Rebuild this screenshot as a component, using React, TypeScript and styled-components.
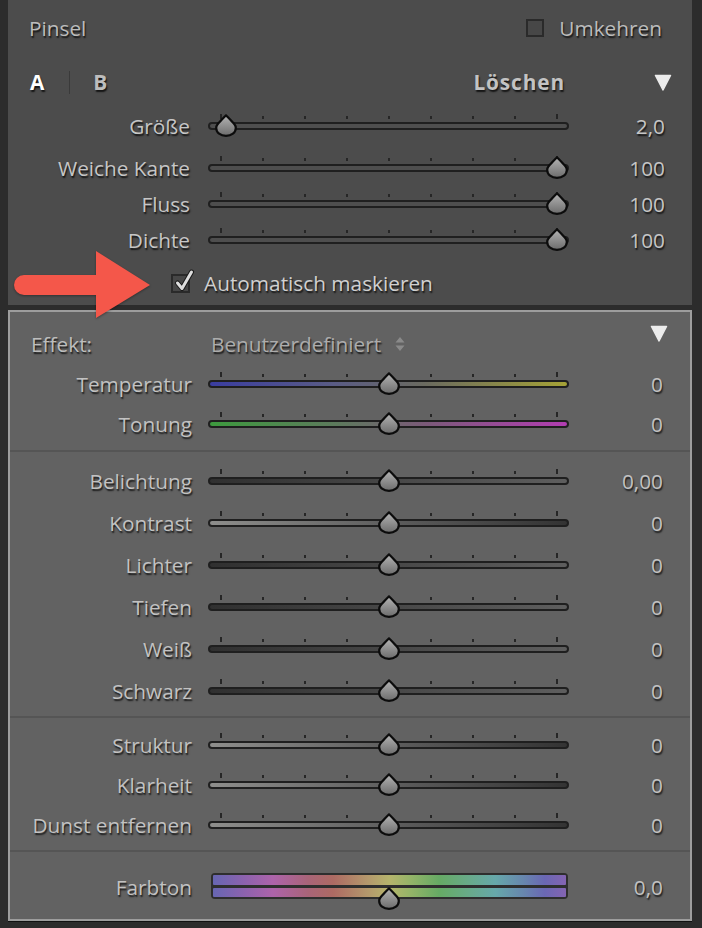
import React from 'react'
import styled, { createGlobalStyle } from 'styled-components'

const GlobalStyle = createGlobalStyle`
  html, body {
    margin: 0;
    padding: 0;
    background: #2c2c2c;
  }
  body {
    font-family: 'Open Sans', 'Noto Sans', sans-serif;
  }
`

const Frame = styled.div`
  position: relative;
  width: 702px;
  height: 928px;
  box-sizing: border-box;
  padding: 0 10px 0 8px;
  background: #2c2c2c;
  display: flex;
  flex-direction: column;
  gap: 5px;
`

const TopPanel = styled.div`
  height: 305px;
  box-sizing: border-box;
  padding-top: 12px;
  background: #4c4c4c;
  display: flex;
  flex-direction: column;
`

const LowerPanel = styled.div`
  height: 611px;
  box-sizing: border-box;
  padding: 14px 0 7px;
  background: #626262;
  border: 2px solid #9d9d9d;
  box-shadow: 0 1px 0 #111;
  display: flex;
  flex-direction: column;
`

const Text = styled.span<{ $color?: string; $bold?: boolean }>`
  font-size: 20.8px;
  font-weight: ${({ $bold }) => ($bold ? 700 : 400)};
  color: ${({ $color }) => $color || '#c6c6c6'};
  text-shadow: 1px 1.5px 1.5px rgba(0, 0, 0, 0.75);
  white-space: nowrap;
  letter-spacing: ${({ $bold }) => ($bold ? '0.9px' : '0')};
`

const HeaderRow = styled.div`
  height: 32px;
  display: flex;
  align-items: center;
  justify-content: space-between;
  padding: 0 30px 0 21px;
`

const CheckLabel = styled.label`
  display: flex;
  align-items: center;
  gap: 15px;
`

const Box = styled.span<{ $size: number }>`
  position: relative;
  width: ${({ $size }) => $size}px;
  height: ${({ $size }) => $size}px;
  box-sizing: border-box;
  border: 2px solid #2a2a2a;
  background: #474747;
  flex: none;
`

const CheckMark = styled.svg`
  position: absolute;
  left: 1px;
  top: -7px;
  overflow: visible;
`

const TabRow = styled.div`
  height: 32px;
  margin-top: 22px;
  display: flex;
  align-items: center;
  padding: 0 20px 0 22px;
`

const TabSep = styled.span`
  width: 1px;
  height: 23px;
  margin: 0 23px 0 24px;
  background: #3a3a3a;
`

const Spacer = styled.span`
  flex: 1;
`

const DisclosureIcon = styled.svg<{ $gap?: number }>`
  flex: none;
  margin-left: ${({ $gap }) => $gap || 0}px;
`

const SliderRow = styled.div<{ $height: number; $mt?: number; $gap: number }>`
  display: grid;
  grid-template-columns: 182px 361px 1fr;
  column-gap: ${({ $gap }) => $gap}px;
  align-items: center;
  height: ${({ $height }) => $height}px;
  margin-top: ${({ $mt }) => $mt || 0}px;
`

const Label = styled(Text)`
  text-align: right;
`

const Value = styled(Text)`
  text-align: right;
  padding-right: 27px;
`

const TrackBox = styled.div`
  position: relative;
  display: flex;
  flex-direction: column;
  gap: 3px;
  padding-bottom: 8px;
`

const Ticks = styled.div`
  height: 5px;
  display: flex;
  align-items: flex-end;
  justify-content: space-between;
  padding: 0 11px 0 12px;
`

const Tick = styled.span<{ $long?: boolean }>`
  width: 2px;
  height: ${({ $long }) => ($long ? 5 : 3)}px;
  background: #262626;
`

const Bar = styled.div<{ $fill: string }>`
  height: 8px;
  box-sizing: border-box;
  border: 2px solid #1f1f1f;
  border-radius: 4px;
  background: ${({ $fill }) => $fill};
`

const ThumbSvg = styled.svg`
  position: absolute;
  top: 0;
`

const AutoRow = styled.div`
  height: 34px;
  margin-top: 8px;
  display: flex;
  align-items: center;
  gap: 14px;
  padding-left: 163px;
`

const Arrow = styled.svg`
  position: absolute;
  left: 14px;
  top: 250px;
  filter: drop-shadow(0 1px 1px rgba(0, 0, 0, 0.35));
`

const EffectRow = styled.div`
  height: 36px;
  display: flex;
  align-items: center;
  padding: 0 22px 0 21px;
`

const EffectLabel = styled(Text)`
  width: 180px;
`

const Stepper = styled.svg`
  margin-left: 13px;
`

const CornerIcon = styled.svg`
  margin-left: auto;
  align-self: flex-start;
  margin-top: -1px;
`

const Divider = styled.div<{ $mt: number; $mb: number }>`
  height: 2px;
  background: #555555;
  margin-top: ${({ $mt }) => $mt}px;
  margin-bottom: ${({ $mb }) => $mb}px;
  flex: none;
`

const HueBox = styled.div`
  position: relative;
  height: 34px;
  padding-left: 3px;
  align-self: start;
  margin-top: 11px;
`

const HueBar = styled.div`
  width: 357px;
  box-sizing: border-box;
  padding: 2px;
  display: flex;
  flex-direction: column;
  gap: 3px;
  background: #2e2e2e;
  border-radius: 4px;
`

const HueStripe = styled.div`
  height: 9.5px;
  border-radius: 1px;
  background: linear-gradient(
    90deg,
    #6766b2 0%,
    #8d62ae 9%,
    #ad63aa 17%,
    #a96478 27%,
    #ad6a63 34%,
    #b4996c 44%,
    #b5b46c 50%,
    #94b468 56%,
    #66aa64 64%,
    #68aa8c 73%,
    #66a8aa 80%,
    #6786ae 88%,
    #6a67b4 94%,
    #8464b2 100%
  );
`

const Thumb = ({ x, top = 0 }: { x: number; top?: number }) => (
  <ThumbSvg width="22" height="23" viewBox="0 0 22 23" style={{ left: x - 11, top }}>
    <defs>
      <linearGradient id="thumbFill" x1="0" y1="0" x2="0" y2="1">
        <stop offset="0" stopColor="#b4b4b4" />
        <stop offset="1" stopColor="#6c6c6c" />
      </linearGradient>
    </defs>
    <path
      d="M11 1.3 C12.6 3 17.2 7.6 19.4 10.3 C20.4 11.5 20.8 12.8 20.8 14 C20.8 18.6 16.5 21.8 11 21.8 C5.5 21.8 1.2 18.6 1.2 14 C1.2 12.8 1.6 11.5 2.6 10.3 C4.8 7.6 9.4 3 11 1.3 Z"
      fill="url(#thumbFill)"
      stroke="#0c0c0c"
      strokeWidth="2.2"
      strokeLinejoin="round"
    />
  </ThumbSvg>
)

const Triangle = ({ gap }: { gap?: number }) => (
  <DisclosureIcon $gap={gap} width="18" height="17" viewBox="0 0 18 17">
    <path d="M1.5 1.5 H16.5 L9 16 Z" fill="#ececec" stroke="#ececec" strokeWidth="1.5" strokeLinejoin="round" />
  </DisclosureIcon>
)

type SliderProps = {
  label: string
  value: string
  pos: number
  fill: string
  height: number
  gap: number
  mt?: number
  color?: string
}

const Slider = ({ label, value, pos, fill, height, gap, mt, color }: SliderProps) => (
  <SliderRow $height={height} $gap={gap} $mt={mt}>
    <Label $color={color}>{label}</Label>
    <TrackBox>
      <Ticks>
        {Array.from({ length: 9 }, (_, i) => (
          <Tick key={i} $long={i === 0 || i === 8} />
        ))}
      </Ticks>
      <Bar $fill={fill} />
      <Thumb x={pos} />
    </TrackBox>
    <Value $color={color}>{value}</Value>
  </SliderRow>
)

const brushSliders = [
  { label: 'Weiche Kante', value: '100', pos: 349 },
  { label: 'Fluss', value: '100', pos: 349 },
  { label: 'Dichte', value: '100', pos: 349 },
]

const darkToLight = 'linear-gradient(90deg, #303030 0%, #474747 50%, #5e5e5e 100%)'
const lightToDark = 'linear-gradient(90deg, #8e8e8c 0%, #5e5e5e 50%, #333333 100%)'

const toneSliders = [
  { label: 'Belichtung', value: '0,00', fill: darkToLight },
  { label: 'Kontrast', value: '0', fill: lightToDark },
  { label: 'Lichter', value: '0', fill: darkToLight },
  { label: 'Tiefen', value: '0', fill: darkToLight },
  { label: 'Weiß', value: '0', fill: darkToLight },
  { label: 'Schwarz', value: '0', fill: darkToLight },
]

const presenceSliders = [
  { label: 'Struktur', value: '0' },
  { label: 'Klarheit', value: '0' },
  { label: 'Dunst entfernen', value: '0' },
]

const lowerText = '#c2c2c2'

export default function App() {
  return (
    <Frame>
      <GlobalStyle />
      <TopPanel>
        <HeaderRow>
          <Text $color="#bcbcbc">Pinsel</Text>
          <CheckLabel>
            <Box $size={18} />
            <Text $color="#bcbcbc">Umkehren</Text>
          </CheckLabel>
        </HeaderRow>
        <TabRow>
          <Text $bold $color="#ffffff">A</Text>
          <TabSep />
          <Text $bold $color="#bdbdbd">B</Text>
          <Spacer />
          <Text $bold $color="#c3c3c3">Löschen</Text>
          <Triangle gap={89} />
        </TabRow>
        <Slider label="Größe" value="2,0" pos={18} fill="#4e4e4e" height={36} gap={18} mt={10} />
        {brushSliders.map((s, i) => (
          <Slider key={s.label} {...s} fill="#4e4e4e" height={36} gap={18} mt={i === 0 ? 6 : 0} />
        ))}
        <AutoRow>
          <Box $size={19}>
            <CheckMark width="20" height="24" viewBox="0 0 20 24">
              <path d="M3.5 14 L8 19.5 L17.5 3" fill="none" stroke="#1a1a1a" strokeWidth="5" strokeLinecap="round" strokeLinejoin="round" />
              <path d="M3.5 14 L8 19.5 L17.5 3" fill="none" stroke="#dedede" strokeWidth="3" strokeLinecap="round" strokeLinejoin="round" />
            </CheckMark>
          </Box>
          <Text $color="#d0d0d0">Automatisch maskieren</Text>
        </AutoRow>
      </TopPanel>

      <LowerPanel>
        <EffectRow>
          <EffectLabel $color="#bdbdbd">Effekt:</EffectLabel>
          <Text $color="#acacac">Benutzerdefiniert</Text>
          <Stepper width="12" height="18" viewBox="0 0 12 18">
            <path d="M1.5 7.5 L6 2 L10.5 7.5 Z M1.5 10.5 L6 16 L10.5 10.5 Z" fill="#8a8a8a" />
          </Stepper>
          <CornerIcon width="18" height="17" viewBox="0 0 18 17">
            <path d="M1.5 1.5 H16.5 L9 16 Z" fill="#ececec" stroke="#ececec" strokeWidth="1.5" strokeLinejoin="round" />
          </CornerIcon>
        </EffectRow>
        <Slider
          label="Temperatur"
          value="0"
          pos={181}
          fill="linear-gradient(90deg, #3a3da0 0%, #5a5c84 35%, #6a6a60 60%, #a5a236 100%)"
          height={40}
          gap={16}
          mt={2}
          color={lowerText}
        />
        <Slider
          label="Tonung"
          value="0"
          pos={181}
          fill="linear-gradient(90deg, #3d9a3e 0%, #5c7a5c 35%, #7a5a78 60%, #b23db2 100%)"
          height={40}
          gap={16}
          color={lowerText}
        />
        <Divider $mt={6} $mb={8} />
        {toneSliders.map((s) => (
          <Slider key={s.label} {...s} pos={181} height={42} gap={16} color={lowerText} />
        ))}
        <Divider $mt={4} $mb={7} />
        {presenceSliders.map((s) => (
          <Slider key={s.label} {...s} pos={181} fill={lightToDark} height={40} gap={16} color={lowerText} />
        ))}
        <Divider $mt={5} $mb={10} />
        <SliderRow $height={50} $gap={16}>
          <Label $color={lowerText}>Farbton</Label>
          <HueBox>
            <HueBar>
              <HueStripe />
              <HueStripe />
            </HueBar>
            <Thumb x={181} top={14} />
          </HueBox>
          <Value $color={lowerText}>0,0</Value>
        </SliderRow>
      </LowerPanel>

      <Arrow width="140" height="70" viewBox="0 0 140 70">
        <path d="M10 25 H82 V1 L136 35 L82 68 V45 H10 A10 10 0 0 1 10 25 Z" fill="#f4574a" />
      </Arrow>
    </Frame>
  )
}
